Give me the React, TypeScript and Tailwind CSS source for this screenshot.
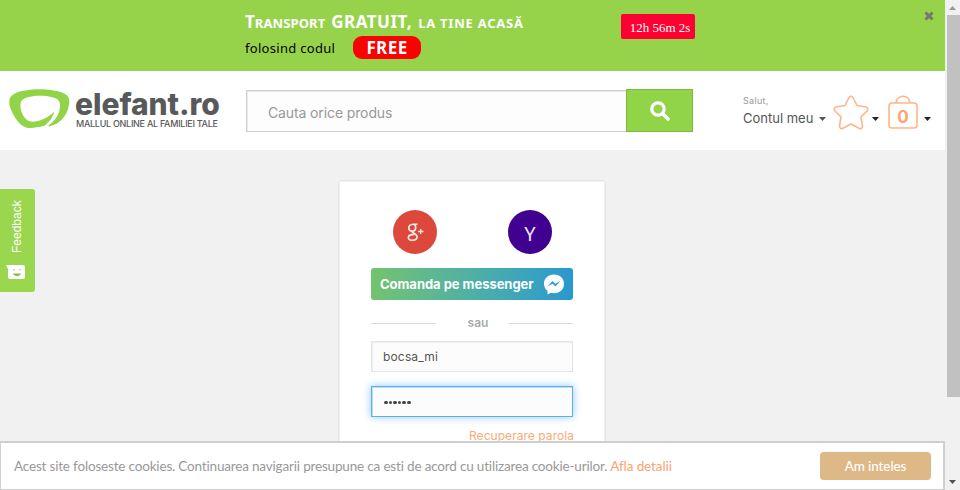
import React from "react";

function Caret({ color = "#222222" }: { color?: string }) {
  return (
    <svg width="7" height="4" viewBox="0 0 7 4" className="block shrink-0">
      <path d="M0 0H7L3.5 4Z" fill={color} />
    </svg>
  );
}

function Promo() {
  return (
    <div className="flex h-[71px] items-start bg-[#96d34a] pl-[245px]">
      <div className="w-[376px] shrink-0 whitespace-nowrap font-['Noto_Sans',sans-serif]">
        <div className="flex h-[34px] items-baseline pt-[10px] leading-6 font-bold text-white">
          <span className="text-[17px]">T</span>
          <span className="text-[13px] tracking-[0.1px]">RANSPORT</span>
          <span className="ml-[6px] text-[17px] tracking-[0.5px]">GRATUIT,</span>
          <span className="ml-[6px] text-[13px] tracking-[0.75px]">LA TINE ACASĂ</span>
        </div>
        <div className="mt-[2px] flex h-[23px] items-center">
          <span className="mt-[3px] w-[108px] text-[13px] tracking-[0.3px] text-black">folosind codul</span>
          <span className="flex h-[23px] w-[68px] items-center justify-center rounded-[9px] bg-[#ff0000] font-['Open_Sans',sans-serif] text-[17px] font-bold tracking-[0.4px] text-white">FREE</span>
        </div>
      </div>
      <div className="mt-[14px] flex h-[25px] w-[74px] items-center justify-center rounded-[2px] bg-[#ff0033] pt-[2px] pl-[4px] font-['Liberation_Serif',serif] text-[13px] whitespace-nowrap text-white">12h 56m 2s</div>
      <svg width="10" height="10" viewBox="0 0 10 10" className="mt-[11px] mr-[11px] ml-auto">
        <path d="M1.5 1.5L8.5 8.5M8.5 1.5L1.5 8.5" stroke="#737870" strokeWidth="3" />
      </svg>
    </div>
  );
}

function Logo() {
  return (
    <div className="flex w-[238px] shrink-0 pl-[9px]">
      <svg width="61" height="40" viewBox="0 0 61 40" className="mt-[18px] shrink-0">
        <path fill="#92d448" d="M5 5C16-1 42-1 54 4C60 6 61 11 60 16C58 27 51 35 40 37.5L37 36C35 37 27 39 19 39C12 38 7 31 3 23C-1 14-1 8 5 5Z" />
        <path fill="white" d="M20 8C30 5.5 43 7 48 10C52 13 51.5 18 50 23C48 29 44 33 39.5 36.5L39 38.5L35 38L38 34.5C42 31 44 27 45.3 22.5C41 27 36 29.5 32 31C26 33.3 20 33.5 17 30C13 26 11 20 11.5 15C12 11 15 9 20 8Z" />
      </svg>
      <div className="ml-[5px] w-[146px] pt-[19px] font-['Inter',sans-serif] whitespace-nowrap text-[#58595b]">
        <div className="text-[30px] leading-[29px] font-extrabold tracking-[-0.05px]">elefant.ro</div>
        <div className="ml-px text-[9px] leading-[9px] font-medium tracking-[-0.28px]">MALLUL ONLINE AL FAMILIEI TALE</div>
      </div>
    </div>
  );
}

function Header() {
  return (
    <header className="flex h-[79px] bg-white">
      <Logo />
      <div className="mt-[18px] ml-[8px] flex h-[43px] w-[447px] shrink-0">
        <div className="mt-px flex flex-1 items-center border border-r-0 border-[#cfcfcf] bg-[#fdfdfd] pt-[2px] pl-[21px] font-['Inter',sans-serif] text-[14px] tracking-[-0.12px] text-[#999] shadow-[inset_1px_1px_0_#e9e9e9]">Cauta orice produs</div>
        <div className="flex w-[67px] items-center justify-center border border-[#80b93b] bg-[#92d448]">
          <svg width="20" height="20" viewBox="0 0 20 20" className="mt-px">
            <circle cx="8" cy="8" r="6.2" fill="none" stroke="white" strokeWidth="3.2" />
            <path d="M12.5 12.5L18 18" stroke="white" strokeWidth="3.6" strokeLinecap="round" />
          </svg>
        </div>
      </div>
      <div className="ml-[50px] w-[76px] shrink-0 pt-[24px] font-['Inter',sans-serif] whitespace-nowrap">
        <div className="text-[9px] leading-3 tracking-[0.3px] text-[#999]">Salut,</div>
        <div className="mt-[3px] text-[13px] leading-4 text-[#555]">Contul meu</div>
      </div>
      <div className="mt-[46px]"><Caret color="#555" /></div>
      <svg width="36" height="36" viewBox="0 0 36 36" className="mt-[24px] ml-[7px] shrink-0">
        <path d="M16 2.5Q18 0 20 2.5L24 10.5L33 12Q36 13 34 16L28 22L29.5 31Q29 35 25.5 33L18 29L10.5 33Q7 35 6.5 31L8 22L2 16Q0 13 3 12L12 10.5Z" fill="none" stroke="#ffb588" strokeWidth="1.6" strokeLinejoin="round" />
      </svg>
      <div className="mt-[46px] ml-[3px]"><Caret /></div>
      <div className="relative mt-[24px] ml-[8px] h-[36px] w-[32px] shrink-0">
        <svg width="32" height="36" viewBox="0 0 32 36">
          <rect x="2" y="8" width="28" height="25" rx="3" fill="none" stroke="#ffb588" strokeWidth="1.6" />
          <path d="M9 8C10-1 22-1 23 8" fill="none" stroke="#ffb588" strokeWidth="1.6" />
        </svg>
        <span className="absolute inset-x-0 top-[12px] text-center font-['Inter',sans-serif] text-[17px] leading-5 font-bold text-[#faa670]">0</span>
      </div>
      <div className="mt-[46px] ml-[5px]"><Caret /></div>
    </header>
  );
}

function Login() {
  return (
    <section className="ml-[338px] h-[340px] w-[268px] rounded-[3px] border border-[#e5e5e5] bg-white pt-[29px] pr-[32px] pl-[32px] font-['Inter',sans-serif] shadow-[inset_0_0_0_1px_#f4f4f4]">
      <div className="flex justify-between pr-[21px] pl-[22px]">
        <div className="flex size-11 items-center justify-center rounded-full bg-[#dc493c]">
          <svg width="17" height="19" viewBox="0 0 17 19" fill="none" stroke="#fbe9e5" className="mt-px">
            <path d="M10.5 1.2H6C2.8 1.2 1.6 3.2 1.8 5.3C2.1 8.8 7.8 9.2 8.6 5.8C9 3.8 8.2 1.8 6.6 1.2" strokeWidth="1.6" />
            <path d="M5 8.2C4.4 10 10.4 10.7 10.1 14C9.8 18.2 1.4 18.4 1.3 14.8C1.3 12 4.5 11.4 7.5 11.4" strokeWidth="1.6" />
            <path d="M11 8.5H16.5M13.7 6V11" strokeWidth="1.3" />
          </svg>
        </div>
        <div className="flex size-11 items-center justify-center rounded-full bg-[#400090] pt-[4px] font-['Noto_Sans',sans-serif] text-[20px] text-[#eee5f7]">Y</div>
      </div>
      <div className="mt-[14px] flex h-8 w-[202px] items-center rounded-[3px] bg-linear-to-r from-[#73c36d] to-[#2998d0] pt-px pl-[9px] text-[13px] font-bold whitespace-nowrap text-white">
        <span className="w-[163px] tracking-[-0.03px]">Comanda pe messenger</span>
        <svg width="22" height="21" viewBox="0 0 22 21" className="-mt-px">
          <path d="M11 0.5C5 0.5 1 4.5 1 9.7C1 12.7 2.3 15 4.5 16.8V20.4L8 18.8C16 20.5 21 15.8 21 9.7C21 4.5 17 0.5 11 0.5Z" fill="white" />
          <path d="M4.5 12.5L9.5 7L12.3 9.7L17.5 7L12.5 12.5L9.7 9.8Z" fill="#32a0c7" />
        </svg>
      </div>
      <div className="mt-[14px] flex h-[18px] w-[202px] items-center justify-between text-[12px] font-semibold text-[#aaa]">
        <span className="h-px w-[65px] bg-[#ddd]" />
        <span className="ml-[11px]">sau</span>
        <span className="h-px w-[64px] bg-[#ddd]" />
      </div>
      <div className="mt-[9px] flex h-[31px] w-[202px] items-center border border-[#e3e3e3] bg-[#fcfcfc] pl-[11px] text-[12px] tracking-[0.16px] text-[#555] shadow-[inset_1px_1px_0_#eeeeee]">bocsa_mi</div>
      <div className="mt-[14px] flex h-[31px] w-[202px] items-center gap-[1px] border border-[#62ade7] bg-[#fcfcfc] pt-[2px] pl-[12px] shadow-[inset_1px_1px_0_#b9dcf7,0_0_8px_#8bcaff]">
        {Array.from({ length: 6 }, (_, i) => <span key={i} className="size-[3.6px] rounded-full bg-[#444]" />)}
      </div>
      <a className="mt-[10px] block w-[203px] text-right text-[12px] leading-[18px] tracking-[0.05px] whitespace-nowrap text-[#faaa7b]">Recuperare parola</a>
    </section>
  );
}

function Feedback() {
  return (
    <aside className="absolute top-[189px] left-0 flex h-[103px] w-[35px] flex-col items-center rounded-r-[3px] bg-[#9bd64f] text-white">
      <span className="mt-[9px] h-[56px] rotate-180 pt-[1px] pl-px font-['Liberation_Sans',sans-serif] text-[12px] leading-4 whitespace-nowrap [writing-mode:vertical-rl]">Feedback</span>
      <svg width="19" height="15" viewBox="0 0 19 15" className="mt-[11px] -ml-[4px]">
        <path d="M0 0H17Q19 0 19 2V12Q19 14 17 14H4Q2 14 2 12V4Z" fill="white" />
        <path d="M8 4V5.5M14 4V5.5M7.5 9Q11 12.5 14.5 9Z" stroke="#85bd43" fill="#85bd43" />
      </svg>
    </aside>
  );
}

function CookieBar() {
  return (
    <footer className="absolute bottom-0 left-0 flex h-[49px] w-[945px] items-center border-2 border-b-1 border-l-1 border-[#cfcfcf] bg-white pl-[13px] font-['Lato',sans-serif] whitespace-nowrap">
      <span className="text-[13.5px] tracking-[-0.175px] text-[#999]">Acest site foloseste cookies. Continuarea navigarii presupune ca esti de acord cu utilizarea cookie-urilor.</span>
      <a className="ml-[3px] text-[13.5px] tracking-[-0.1px] text-[#faa56f]">Afla detalii</a>
      <button className="mr-[12px] ml-auto h-7 w-[111px] rounded-[4px] bg-[#deb887] text-[13.5px] font-medium tracking-[-0.1px] text-white">Am inteles</button>
    </footer>
  );
}

function Scrollbar() {
  return (
    <div className="flex h-[490px] w-[15px] shrink-0 flex-col items-center bg-[#f1f1f1]">
      <svg width="7" height="4" className="mt-[6px]"><path d="M0 4L3.5 0L7 4Z" fill="#999" /></svg>
      <div className="mt-[5px] ml-px h-[382px] w-[13px] bg-[#c1c1c1]" />
      <div className="mt-auto mb-[6px] -ml-px"><Caret color="#505050" /></div>
    </div>
  );
}

export default function App() {
  return (
    <div className="relative flex h-[490px] w-[960px] overflow-hidden bg-[#f1f1f1]">
      <main className="h-[490px] w-[945px] shrink-0 overflow-hidden">
        <Promo />
        <Header />
        <div className="pt-[30px]"><Login /></div>
      </main>
      <Scrollbar />
      <Feedback />
      <CookieBar />
    </div>
  );
}
